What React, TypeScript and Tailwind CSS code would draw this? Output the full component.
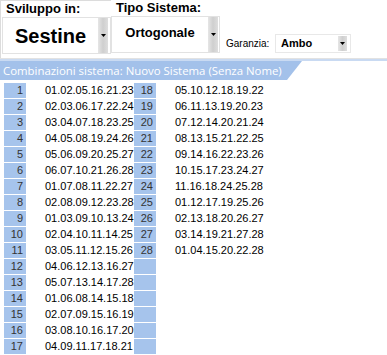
import React from "react";

const combos: string[] = [
  "01.02.05.16.21.23",
  "02.03.06.17.22.24",
  "03.04.07.18.23.25",
  "04.05.08.19.24.26",
  "05.06.09.20.25.27",
  "06.07.10.21.26.28",
  "01.07.08.11.22.27",
  "02.08.09.12.23.28",
  "01.03.09.10.13.24",
  "02.04.10.11.14.25",
  "03.05.11.12.15.26",
  "04.06.12.13.16.27",
  "05.07.13.14.17.28",
  "01.06.08.14.15.18",
  "02.07.09.15.16.19",
  "03.08.10.16.17.20",
  "04.09.11.17.18.21",
  "05.10.12.18.19.22",
  "06.11.13.19.20.23",
  "07.12.14.20.21.24",
  "08.13.15.21.22.25",
  "09.14.16.22.23.26",
  "10.15.17.23.24.27",
  "11.16.18.24.25.28",
  "01.12.17.19.25.26",
  "02.13.18.20.26.27",
  "03.14.19.21.27.28",
  "01.04.15.20.22.28",
];

function DropButton({ cls }: { cls: string }) {
  return (
    <div
      className={
        "flex items-center justify-center bg-gradient-to-r from-[#e6e6e6] via-[#cfcfcf] to-[#dedede] " +
        cls
      }
    >
      <svg width="5" height="3" viewBox="0 0 5 3">
        <polygon points="0,0 5,0 2.5,3" fill="#000" />
      </svg>
    </div>
  );
}

function Row({ n, text }: { n: number | null; text: string }) {
  return (
    <div className="flex h-[16px] items-start">
      <div className="w-[22px] h-[15px] bg-[#a6c4ec] text-[#333] text-[11px] leading-[15px] text-right pr-[3px]">
        {n ?? ""}
      </div>
      <div className="pl-[19px] text-[11px] leading-[15px] text-black">{text}</div>
    </div>
  );
}

export default function App() {
  const col1 = Array.from({ length: 17 }, (_, i) => i);
  const col2 = Array.from({ length: 17 }, (_, i) => i + 17);
  return (
    <div className="w-[387px] h-[355px] bg-white overflow-hidden font-['Liberation_Sans',Arial,sans-serif]">
      {/* top selectors */}
      <div className="flex h-[59px] border-b border-[#e2e2e2]">
        <div className="w-[111px] border-l border-t border-[#dcdcdc] flex flex-col">
          <div className="h-[16px] pl-[5px] text-[13px] leading-[15px] font-bold text-black">Sviluppo in:</div>
          <div className="ml-[1px] w-[109px] h-[37px] border border-[#e2e2e2] flex">
            <div className="flex-1 flex items-center justify-center text-[20px] font-bold text-black">Sestine</div>
            <DropButton cls="w-[10px] h-full mr-[2px]" />
          </div>
        </div>
        <div className="w-[109px] flex flex-col">
          <div className="h-[16px] pl-[5px] text-[13px] leading-[15px] font-bold text-black">Tipo Sistema:</div>
          <div className="w-[109px] h-[37px] border border-[#e2e2e2] flex">
            <div className="flex-1 flex items-center justify-center text-[13px] font-bold text-black pb-[3px]">Ortogonale</div>
            <DropButton cls="w-[10px] h-full mr-[1px]" />
          </div>
        </div>
        <div className="flex items-start pt-[38px] pl-[6px] text-[10px] leading-[12px] text-black w-[55px]">Garanzia:</div>
        <div className="pt-[34px]">
          <div className="w-[76px] h-[19px] border border-[#e8e8e8] flex">
            <div className="flex-1 pl-[5px] text-[11px] leading-[17px] font-bold text-black">Ambo</div>
            <DropButton cls="w-[9px] h-[15px] mt-[1px] mr-[3px]" />
          </div>
        </div>
      </div>
      {/* blue line and tab */}
      <div className="h-[2px] bg-[#c9daf2]" />
      <div className="h-[19px] w-[302px] bg-[#a3c1ea] text-white text-[11.4px] leading-[19px] pl-[3px] font-['Open_Sans',sans-serif] [clip-path:polygon(0_0,100%_0,calc(100%-15px)_100%,0_100%)] whitespace-nowrap">
        Combinazioni sistema: Nuovo Sistema (Senza Nome)
      </div>
      {/* combination grid */}
      <div className="mt-[3px] pl-[4px] flex">
        <div className="w-[130px] flex flex-col">
          {col1.map((i) => (
            <Row key={i} n={i + 1} text={combos[i] ?? ""} />
          ))}
        </div>
        <div className="w-[130px] flex flex-col">
          {col2.map((i) => (
            <Row key={i} n={i < 28 ? i + 1 : null} text={combos[i] ?? ""} />
          ))}
        </div>
      </div>
    </div>
  );
}
